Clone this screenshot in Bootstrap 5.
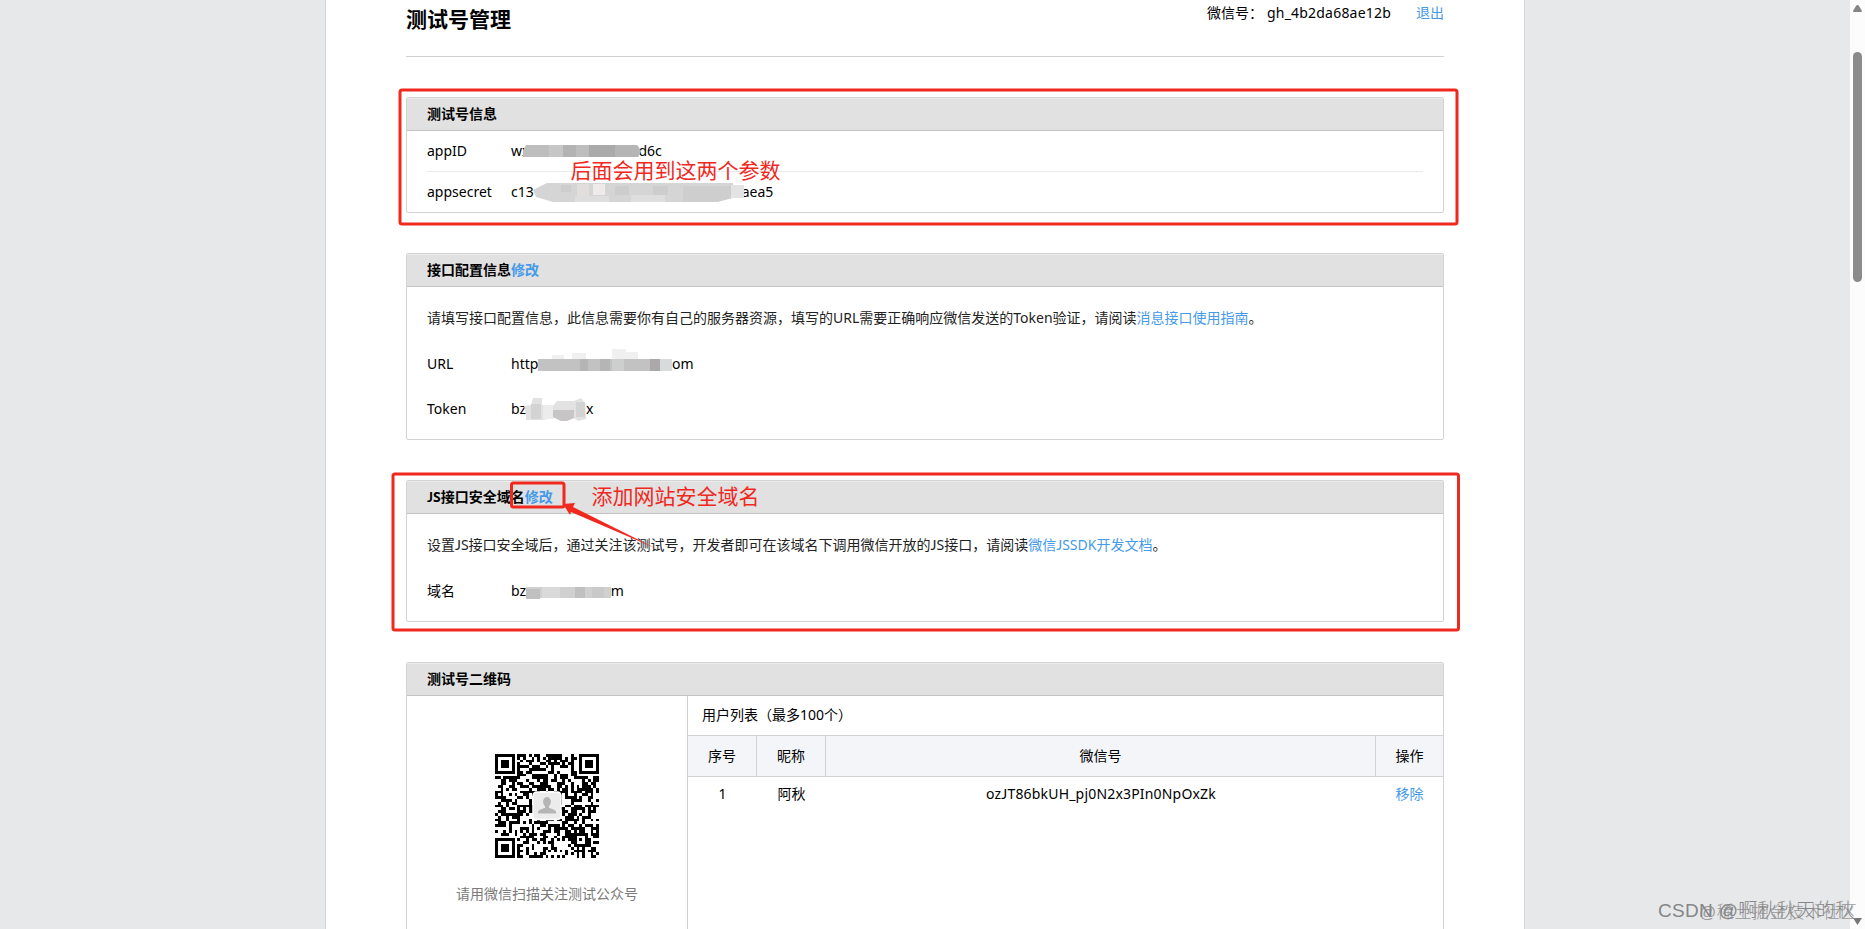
<!DOCTYPE html>
<html lang="zh-CN">
<head>
<meta charset="utf-8">
<title>测试号管理</title>
<link href="https://cdn.jsdelivr.net/npm/bootstrap@5.3.0/dist/css/bootstrap.min.css" rel="stylesheet">
<style>
html,body{height:100%;overflow:hidden}
body{background:#e7e8ea;color:#000;font:14px/20px "Noto Sans","Noto Sans CJK SC",sans-serif}
a{color:#459ae9;text-decoration:none}
.page-area{flex:1;height:929px}
.sheet{width:1200px;margin-left:325px;border:solid #d3d5d7;border-width:0 1px;background:#fff;padding:0 80px;height:929px;overflow:hidden}
.top-bar{height:57px;border-bottom:1px solid #d0d0d0;margin-bottom:40px}
.top-bar h1{font-size:21px;font-weight:700;line-height:30px;margin:4px 0 0}
.account{padding-top:3px}
.account .tag{width:60px}
.account .ident{width:149px;letter-spacing:.2px}
.jay{font-family:Lato,sans-serif}
.wide-id{letter-spacing:.18px}
.panel{border:1px solid #d3d3d3;border-radius:2px;margin-bottom:40px;width:1038px}
.panel-head{background:#e1e1e1;height:33px;border-bottom:1px solid #c3c3c3;border-top:1px solid #ececec;line-height:30px;padding-left:20px;font-weight:700}
.pair{padding:0 20px;display:flex;align-items:center}
.pair>span:first-child{width:84px}
.val{display:flex;align-items:center;height:20px}
.val span{white-space:nowrap;flex:none}
.val svg{flex:none;z-index:1}
.desc{color:#222;padding-left:20px;white-space:nowrap;margin-top:21px}
.p1{height:116px}.p1 .pair{height:40px}.p1 .divide{margin:0 20px;height:1px;background:#e7e9eb}
.p2{height:187px}.p3{height:142px}.p4{height:270px}
.qr-col{width:281px;height:240px;border-right:1px solid #d0d0d0;padding-top:58px;text-align:center}
.hint{color:#7b7b7b;margin-top:26px}
.list-title{height:39px;line-height:37px;padding-left:14px}
.user-grid{display:grid;grid-template-columns:69px 69px 550px 1fr;text-align:center}
.user-grid .th-cell{background:#f3f5f9;border:solid #d0d2d6;border-width:1px 1px 1px 0;height:42px;line-height:40px}
.user-grid .th-cell:nth-child(4){border-right:0}
.user-grid .td-cell{line-height:34px}
.scroll-col{width:15px;background:#fcfcfc;height:929px}
.overlay{position:absolute;left:0;top:0;pointer-events:none}
.note{font:21px "Noto Sans CJK SC",sans-serif;fill:#f0281e}
</style>
</head>
<body>
<div class="d-flex position-relative">
<main class="page-area">
<div class="sheet">
  <header class="top-bar d-flex justify-content-between align-items-start">
    <h1>测试号管理</h1>
    <div class="account d-flex"><span class="tag">微信号：</span><span class="ident">gh_4b2da68ae12b</span><a href="#">退出</a></div>
  </header>

  <section class="panel p1">
    <div class="panel-head">测试号信息</div>
    <div class="pair"><span>appID</span><div class="val"><span>wx</span>
      <svg width="118" height="12" style="margin:0 -3px 0 -6px"><path fill="#bdbdbd" d="M3 0H114L118 6L115 12H0V6z"/><path fill="#c6c6c6" d="M26 0h14v12H26z"/><path fill="#b3b3b3" d="M40 0h13v12H40z"/><path fill="#aaa" d="M66 0h26v12H66z"/><path fill="#b5b5b5" d="M92 0h22l4 6-3 6H92z"/></svg><span>d6c</span></div></div>
    <div class="divide"></div>
    <div class="pair"><span>appsecret</span><div class="val"><span>c13</span>
      <svg width="211" height="20" style="margin:2px -2px 0 -1px"><path fill="#d5d5d5" d="M0 7L14 0H200V2H211V15H200L184 19H20L3 14z"/><path fill="#e1dedd" d="M44 1h12v12H44z"/><path fill="#efebea" d="M60 1h12v11H60z"/><path fill="#cdcdcd" d="M28 2h10v7H28zM82 3h14v9H82zM120 3h15v9h-15z"/><path fill="#dedede" d="M98 12h34v7H98zM42 13h34v6H42z"/><path fill="#cecece" d="M150 3h48v12l-14 4h-34z"/><path fill="#e3e3e3" d="M198 2h13v13h-13z"/></svg><span>aea5</span></div></div>
  </section>

  <section class="panel p2">
    <div class="panel-head">接口配置信息<a href="#">修改</a></div>
    <div class="desc">请填写接口配置信息，此信息需要你有自己的服务器资源，填写的URL需要正确响应微信发送的Token验证，请阅读<a href="#">消息接口使用指南</a>。</div>
    <div class="pair" style="margin-top:26px"><span>URL</span><div class="val"><span style="width:27px">http</span>
      <svg width="134" height="24" style="margin-top:-6px"><path fill="#f0f0f0" d="M14 6h12v6H14zM34 4h14v8H34zM74 0h14v3h12v9H74z"/><path fill="#c2c2c2" d="M0 10h134v12H0z"/><path fill="#b5b5b5" d="M42 10h8v12h-8zM62 10h10v12H62z"/><path fill="#cdcfce" d="M74 10h12v12H74z"/><path fill="#aaa8a9" d="M112 10h10v12h-10z"/><path fill="#d8dbdc" d="M122 10h12v12h-12z"/></svg><span>om</span></div></div>
    <div class="pair" style="margin-top:25px"><span>Token</span><div class="val"><span>bz</span>
      <svg width="63" height="25" style="margin:0 -1px 0 -2px"><path fill="#e2e2e2" d="M0 9L7 8L9 1H18V8L29 9L33 4H50L57 1L61 6L62 22L54 24L50 21L42 24H37L31 21L18 23H2V17z"/><path fill="#d3d3d3" d="M7 7h10v15H7zM52 5h9v15h-9z"/><path fill="#ececec" d="M19 8h10v14H19z"/><path fill="#c7c5c6" d="M29 13h21v8l-7 3h-6l-8-4z"/></svg><span>x</span></div></div>
  </section>

  <section class="panel p3">
    <div class="panel-head"><span class="jay">J</span>S接口安全域名<a href="#">修改</a></div>
    <div class="desc">设置<span class="jay">J</span>S接口安全域后，通过关注该测试号，开发者即可在该域名下调用微信开放的<span class="jay">J</span>S接口，请阅读<a href="#">微信<span class="jay">J</span>SSDK开发文档</a>。</div>
    <div class="pair" style="margin-top:26px"><span>域名</span><div class="val"><span>bz:</span>
      <svg width="85" height="12" style="margin:4px 0 0 -4px"><path fill="#d0d0d0" d="M0 0h85v11H14v1H0z"/><path fill="#c0c0c0" d="M0 2h14v10H0z"/><path fill="#dadada" d="M16 0h18v11H16z"/><path fill="#c0c0c0" d="M49 0h10v11H49z"/><path fill="#c9c9c9" d="M66 0h12v11H66z"/></svg><span>m</span></div></div>
  </section>

  <section class="panel p4">
    <div class="panel-head">测试号二维码</div>
    <div class="d-flex">
      <div class="qr-col"><svg id="qr" width="104" height="104" viewBox="0 0 37 37" shape-rendering="crispEdges"></svg>
        <div class="hint">请用微信扫描关注测试公众号</div></div>
      <div class="flex-grow-1">
        <div class="list-title">用户列表（最多100个）</div>
        <div class="user-grid">
          <div class="th-cell">序号</div><div class="th-cell">昵称</div><div class="th-cell">微信号</div><div class="th-cell">操作</div>
          <div class="td-cell">1</div><div class="td-cell">阿秋</div><div class="td-cell"><span class="wide-id">oz<span class="jay">J</span>T86bkUH_pj0N2x3PIn0NpOxZk</span></div><div class="td-cell"><a href="#">移除</a></div>
        </div>
      </div>
    </div>
  </section>
</div>
</main>
<aside class="scroll-col"><svg width="15" height="929"><path fill="#858585" d="M7.500 5Q8.500 5 9 6L12 11Q12 12 11 12H4Q3 12 3 11L6 6Q6.500 5 7.500 5z"/><rect x="3" y="52" width="9" height="230" rx="4.500" fill="#8b8b8b"/><path fill="#777" d="M3 918H12L7.500 925z"/></svg></aside>

<svg class="overlay" width="1865" height="929" fill="none">
  <g stroke="#f0281e" stroke-width="3"><rect x="400" y="90" width="1057" height="134" rx="2"/><rect x="393" y="474" width="1065.500" height="156" rx="2"/><rect x="511.500" y="483" width="52.500" height="24" rx="2"/></g>
  <path fill="#f0281e" d="M563 504L575 503L573 507L655 548L571 512L570 515z"/>
  <text class="note" x="570.500" y="178">后面会用到这两个参数</text>
  <text class="note" x="591.500" y="504">添加网站安全域名</text>
  <g fill="#858687" font-weight="300" font-family="'Liberation Sans','Noto Sans CJK SC',sans-serif"><text x="1658" y="917" font-size="19" textLength="196">CSDN @啊秋秋天的秋</text>
  <text x="1699" y="918" font-size="17" textLength="158" opacity=".8">@稀土掘金技术社区</text></g>
</svg>
</div>
<script>
// QR symbol: 37 x 37 modules, three finders, one alignment mark, avatar in the middle
(function(){
  const n=37,s=[];let r=20231;
  const rnd=()=>(r=(r*1103515245+12345)%2147483648)/2147483648;
  const ring=(x,y,cx,cy)=>Math.max(Math.abs(x-cx),Math.abs(y-cy));
  for(let y=0;y<n;y++)for(let x=0;x<n;x++){
    let on=rnd()<.52;
    for(const [cx,cy] of [[3,3],[33,3],[3,33]]){const d=ring(x,y,cx,cy);if(d<=4)on=d===3||d<2}
    const a=ring(x,y,30,30);if(a<=2)on=a!==1;
    if(on)s.push(`M${x} ${y}h1v1h-1z`);
  }
  document.getElementById('qr').innerHTML=`<path d="${s.join('')}"/><rect x="13.500" y="13.500" width="10" height="9.800" rx="1.300" fill="#ececec" stroke="#fff" stroke-width=".5" shape-rendering="auto"/><g fill="#b5b5b5" shape-rendering="auto"><ellipse cx="18.500" cy="17" rx="1.400" ry="1.700"/><path d="M17.800 18h1.400v1.100l2 .8q.6.300.6 1.300h-6.600q0-1 .6-1.300l2-.8z"/></g>`;
})();
</script>
<script src="https://cdn.jsdelivr.net/npm/bootstrap@5.3.0/dist/js/bootstrap.bundle.min.js"></script>
</body>
</html>
